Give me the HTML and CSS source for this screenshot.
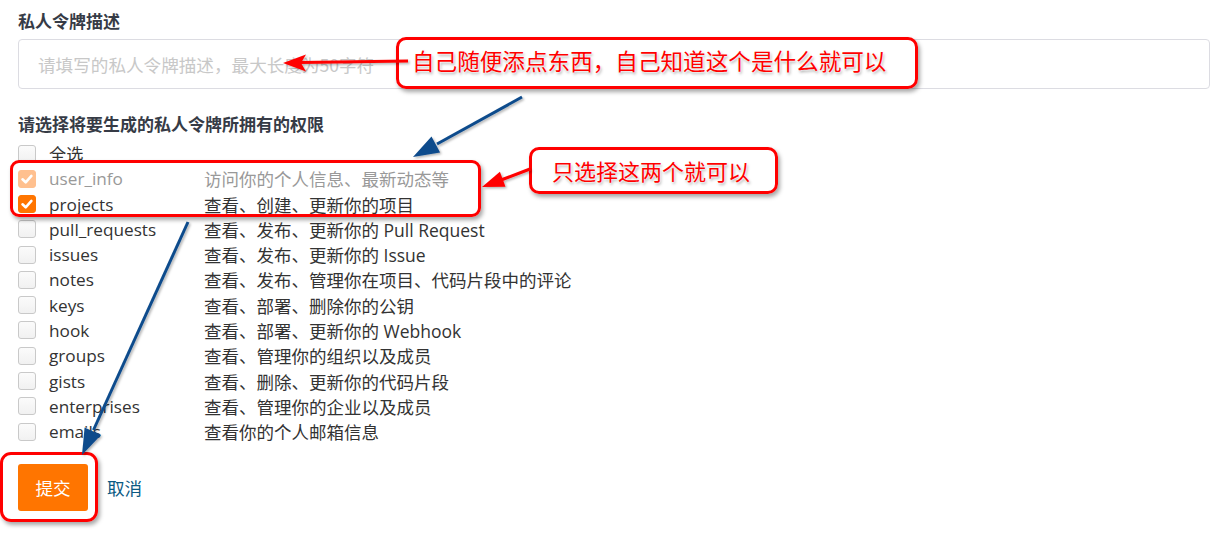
FILE: index.html
```html
<!DOCTYPE html>
<html lang="zh-CN">
<head>
<meta charset="utf-8">
<title>私人令牌</title>
<link rel="stylesheet" href="styles.css">
</head>
<body>
<div class="page">
  <div class="field-label">私人令牌描述</div>
  <div class="input"><span class="placeholder">请填写的私人令牌描述，最大长度为50字符</span></div>

  <div class="section-title">请选择将要生成的私人令牌所拥有的权限</div>
  <div class="perm-list">
    <div class="row"><span class="cb"></span><span class="name">全选</span></div>
    <div class="row disabled"><span class="cb checked"><svg viewBox="0 0 18 18"><path d="M4.5 9.3 L7.7 12.3 L13.4 5.9"/></svg></span><span class="name">user_info</span><span class="desc">访问你的个人信息、最新动态等</span></div>
    <div class="row"><span class="cb checked"><svg viewBox="0 0 18 18"><path d="M4.5 9.3 L7.7 12.3 L13.4 5.9"/></svg></span><span class="name">projects</span><span class="desc">查看、创建、更新你的项目</span></div>
    <div class="row"><span class="cb"></span><span class="name">pull_requests</span><span class="desc">查看、发布、更新你的 Pull Request</span></div>
    <div class="row"><span class="cb"></span><span class="name">issues</span><span class="desc">查看、发布、更新你的 Issue</span></div>
    <div class="row"><span class="cb"></span><span class="name">notes</span><span class="desc">查看、发布、管理你在项目、代码片段中的评论</span></div>
    <div class="row"><span class="cb"></span><span class="name">keys</span><span class="desc">查看、部署、删除你的公钥</span></div>
    <div class="row"><span class="cb"></span><span class="name">hook</span><span class="desc">查看、部署、更新你的 Webhook</span></div>
    <div class="row"><span class="cb"></span><span class="name">groups</span><span class="desc">查看、管理你的组织以及成员</span></div>
    <div class="row"><span class="cb"></span><span class="name">gists</span><span class="desc">查看、删除、更新你的代码片段</span></div>
    <div class="row"><span class="cb"></span><span class="name">enterprises</span><span class="desc">查看、管理你的企业以及成员</span></div>
    <div class="row"><span class="cb"></span><span class="name">emails</span><span class="desc">查看你的个人邮箱信息</span></div>
  </div>

  <div class="actions">
    <span class="btn-submit">提交</span>
    <span class="btn-cancel">取消</span>
  </div>
</div>

<div class="note note-desc"><span class="note-text">自己随便添点东西，自己知道这个是什么就可以</span></div>
<div class="note note-rows"></div>
<div class="note note-pick"><span class="note-text">只选择这两个就可以</span></div>
<div class="note note-btn"></div>

<svg class="arrows" width="1227" height="534" viewBox="0 0 1227 534">
  <defs>
    <filter id="sh" x="-20%" y="-20%" width="140%" height="140%">
      <feDropShadow dx="1.5" dy="1.5" stdDeviation="1.2" flood-color="#000" flood-opacity="0.3"/>
    </filter>
  </defs>
  <g filter="url(#sh)">
    <line x1="408" y1="61" x2="300" y2="62.6" class="red"/>
    <polygon points="283,63 306,54.5 301,63 306,71.5" class="red-fill"/>
    <line x1="530" y1="169" x2="501" y2="180" class="red"/>
    <polygon points="482,187 499.9,171.8 502.7,179.3 505.5,186.8" class="red-fill"/>
    <line x1="522" y1="97" x2="437" y2="144" class="blue"/>
    <polygon points="413,157 431.5,136.6 435.8,144.5 440.1,152.4" class="blue-fill"/>
    <line x1="188" y1="222" x2="93.5" y2="430" class="blue"/>
    <polygon points="82,455 84.6,427.6 92.8,431.3 101,435" class="blue-fill"/>
  </g>
</svg>
</body>
</html>
```

FILE: styles.css
```css
* { box-sizing: border-box; }

html, body {
  margin: 0;
  padding: 0;
  background: #fff;
}

body {
  width: 1227px;
  height: 534px;
  overflow: hidden;
  position: relative;
  font-family: "Open Sans", "Noto Sans CJK SC", sans-serif;
  color: #333;
}

.page {
  padding: 10px 17px 0 18px;
}

.field-label,
.section-title {
  font-family: "Noto Sans CJK SC", sans-serif;
  font-weight: 700;
  font-size: 17px;
  line-height: 22px;
  color: #363b46;
}

.input {
  margin-top: 7px;
  height: 50px;
  width: 1192px;
  border: 1px solid #dcdce2;
  border-radius: 4px;
  display: flex;
  align-items: center;
  padding-left: 19px;
}

.placeholder {
  font-family: "Noto Sans CJK SC", sans-serif;
  font-size: 17.6px;
  color: #c8c8c8;
}

.section-title {
  margin-top: 24px;
}

.perm-list {
  margin-top: 6px;
  display: flex;
  flex-direction: column;
}

.row {
  height: 25.27px;
  display: flex;
  align-items: center;
  font-size: 17.2px;
  color: #333;
}

.cb {
  flex: none;
  width: 18px;
  height: 18px;
  border: 1px solid #c9c9c9;
  border-radius: 3px;
  background: linear-gradient(#fbfbfb, #f1f1f1);
  display: flex;
  align-items: center;
  justify-content: center;
}

.cb.checked {
  background: #ff7500;
  border-color: #ff7500;
}

.cb svg {
  width: 18px;
  height: 18px;
  flex: none;
}

.cb svg path {
  fill: none;
  stroke: #fff;
  stroke-width: 2.6;
  stroke-linecap: round;
  stroke-linejoin: round;
}

.row.disabled .cb {
  background: #ffc08f;
  border-color: #ffc08f;
}

.row.disabled {
  color: #999;
}

.name {
  margin-left: 13px;
  width: 155px;
  flex: none;
  white-space: nowrap;
}

.desc {
  white-space: nowrap;
  font-size: 17.5px;
}

.actions {
  margin-top: 20px;
  display: flex;
  align-items: center;
  gap: 19px;
}

.btn-submit {
  width: 70px;
  height: 47px;
  background: #ff7500;
  color: #fff;
  border-radius: 3px;
  display: flex;
  align-items: center;
  justify-content: center;
  font-family: "Noto Sans CJK SC", sans-serif;
  font-size: 17.6px;
}

.btn-cancel {
  font-family: "Noto Sans CJK SC", sans-serif;
  font-size: 17.6px;
  color: #0b5a83;
}

/* annotation overlays */
.note {
  position: absolute;
  border: 3px solid #ff0000;
  border-radius: 10px;
  box-shadow: 2px 3px 4px rgba(0, 0, 0, 0.35);
  display: flex;
  align-items: center;
}

.note-text {
  font-family: "Noto Sans CJK SC", sans-serif;
  font-size: 22.6px;
  line-height: 1;
  margin-top: -3px;
  color: #ff0000;
  white-space: nowrap;
  text-shadow: 0 0 2px #fff, 0 0 2px #fff, 1px 2px 3px rgba(0, 0, 0, 0.35);
}

.note-desc {
  left: 396px;
  top: 37px;
  width: 522px;
  height: 52px;
  padding-left: 13px;
}

.note-rows {
  left: 10px;
  top: 160px;
  width: 471px;
  height: 57px;
  border-radius: 9px;
}

.note-pick {
  left: 529px;
  top: 147px;
  width: 249px;
  height: 47px;
  padding-left: 20px;
}

.note-pick .note-text {
  font-size: 22px;
  margin-top: -2px;
}

.note-btn {
  left: 0;
  top: 452px;
  width: 98px;
  height: 70px;
  border-radius: 11px;
}

.arrows {
  position: absolute;
  left: 0;
  top: 0;
  pointer-events: none;
}

.arrows .red {
  stroke: #ff0000;
  stroke-width: 3;
}

.arrows .red-fill {
  fill: #ff0000;
}

.arrows .blue {
  stroke: #0d4b8c;
  stroke-width: 3;
}

.arrows .blue-fill {
  fill: #0d4b8c;
}
```
